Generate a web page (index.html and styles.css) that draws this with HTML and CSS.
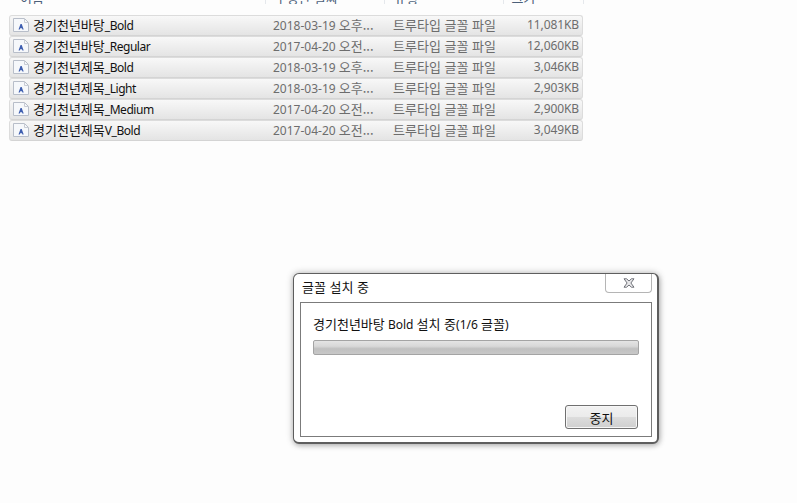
FILE: index.html
```html
<!DOCTYPE html>
<html lang="ko">
<head>
<meta charset="utf-8">
<title>글꼴 설치 중</title>
<link rel="stylesheet" href="styles.css">
</head>
<body>
<div class="explorer">
  <div class="head">
    <div class="hc c-name"><span class="ko">이름</span></div>
    <div class="hc c-date"><span class="ko">수정한 날짜</span></div>
    <div class="hc c-type"><span class="ko">유형</span></div>
    <div class="hc c-size"><span class="ko">크기</span></div>
  </div>
  <div class="list">
    <div class="row"><svg class="ficon" viewBox="0 0 16 14"><path class="page" d="M.5.5h11l4 4v9H.5z"/><path class="fold" d="M11.5.5v4h4"/><path class="a" d="M5.5 11.5l2-5.5h1.2l2 5.5H9.4L9 10.2H7.2l-.4 1.3z"/></svg><span class="n"><span class="ko">경기천년바탕</span>_Bold</span><span class="d">2018-03-19 <span class="ko">오후...</span></span><span class="t ko">트루타입 글꼴 파일</span><span class="s">11,081KB</span></div>
    <div class="row"><svg class="ficon" viewBox="0 0 16 14"><path class="page" d="M.5.5h11l4 4v9H.5z"/><path class="fold" d="M11.5.5v4h4"/><path class="a" d="M5.5 11.5l2-5.5h1.2l2 5.5H9.4L9 10.2H7.2l-.4 1.3z"/></svg><span class="n"><span class="ko">경기천년바탕</span>_Regular</span><span class="d">2017-04-20 <span class="ko">오전...</span></span><span class="t ko">트루타입 글꼴 파일</span><span class="s">12,060KB</span></div>
    <div class="row"><svg class="ficon" viewBox="0 0 16 14"><path class="page" d="M.5.5h11l4 4v9H.5z"/><path class="fold" d="M11.5.5v4h4"/><path class="a" d="M5.5 11.5l2-5.5h1.2l2 5.5H9.4L9 10.2H7.2l-.4 1.3z"/></svg><span class="n"><span class="ko">경기천년제목</span>_Bold</span><span class="d">2018-03-19 <span class="ko">오후...</span></span><span class="t ko">트루타입 글꼴 파일</span><span class="s">3,046KB</span></div>
    <div class="row"><svg class="ficon" viewBox="0 0 16 14"><path class="page" d="M.5.5h11l4 4v9H.5z"/><path class="fold" d="M11.5.5v4h4"/><path class="a" d="M5.5 11.5l2-5.5h1.2l2 5.5H9.4L9 10.2H7.2l-.4 1.3z"/></svg><span class="n"><span class="ko">경기천년제목</span>_Light</span><span class="d">2018-03-19 <span class="ko">오후...</span></span><span class="t ko">트루타입 글꼴 파일</span><span class="s">2,903KB</span></div>
    <div class="row"><svg class="ficon" viewBox="0 0 16 14"><path class="page" d="M.5.5h11l4 4v9H.5z"/><path class="fold" d="M11.5.5v4h4"/><path class="a" d="M5.5 11.5l2-5.5h1.2l2 5.5H9.4L9 10.2H7.2l-.4 1.3z"/></svg><span class="n"><span class="ko">경기천년제목</span>_Medium</span><span class="d">2017-04-20 <span class="ko">오전...</span></span><span class="t ko">트루타입 글꼴 파일</span><span class="s">2,900KB</span></div>
    <div class="row"><svg class="ficon" viewBox="0 0 16 14"><path class="page" d="M.5.5h11l4 4v9H.5z"/><path class="fold" d="M11.5.5v4h4"/><path class="a" d="M5.5 11.5l2-5.5h1.2l2 5.5H9.4L9 10.2H7.2l-.4 1.3z"/></svg><span class="n"><span class="ko">경기천년제목</span>V_Bold</span><span class="d">2017-04-20 <span class="ko">오전...</span></span><span class="t ko">트루타입 글꼴 파일</span><span class="s">3,049KB</span></div>
  </div>
</div>

<div class="dialog">
  <div class="titlebar">
    <span class="title ko">글꼴 설치 중</span>
    <button class="close" aria-label="닫기"><svg viewBox="0 0 12 10" class="x"><path d="M1 .8h2.6L6 3l2.4-2.2H11L7.9 5 11 9.2H8.4L6 7 3.6 9.2H1L4.1 5z"/></svg></button>
  </div>
  <div class="panel">
    <div class="msg"><span class="ko">경기천년바탕</span> Bold <span class="ko">설치 중</span>(1/6 <span class="ko">글꼴</span>)</div>
    <div class="progress"></div>
    <div class="actions"><button class="stop"><span class="ko">중지</span></button></div>
  </div>
</div>
</body>
</html>
```

FILE: styles.css
```css
* { box-sizing: border-box; }
html, body { margin: 0; height: 100%; }
body {
  width: 797px;
  height: 503px;
  overflow: hidden;
  position: relative;
  background: #fdfdfd;
  font-family: "Noto Sans", "Noto Sans CJK KR", sans-serif;
  font-size: 12px;
  color: #000;
}
.ko {
  font-family: "Noto Sans CJK KR", sans-serif;
  font-size: 13px;
  letter-spacing: 0;
}
.explorer { padding-left: 9px; width: 584px; }
.head {
  height: 4px;
  margin-bottom: 11px;
  display: flex;
  overflow: hidden;
  color: #4c607a;
  line-height: 12px;
}
.hc {
  height: 4px;
  display: flex;
  align-items: flex-end;
  border-right: 1px solid #e5e8ec;
  white-space: nowrap;
}
.c-name { width: 258px; padding-left: 11px; }
.c-date { width: 120px; padding-left: 9px; }
.c-type { width: 120px; padding-left: 9px; }
.c-size { width: 80px; padding-left: 7px; }
.list { width: 574px; }
.row {
  height: 21px;
  display: flex;
  align-items: center;
  border: 1px solid #dcdcdc;
  border-bottom-color: #d4d4d4;
  border-radius: 3px;
  background: linear-gradient(#f8f8f8, #f2f2f2 30%, #e4e4e4);
  white-space: nowrap;
  color: #6d6d6d;
  line-height: 18px;
  padding-bottom: 1px;
}
.ficon { width: 16px; height: 14px; margin-left: 3px; flex: none; }
.page { fill: #f6f8fb; stroke: #b8bec9; }
.fold { fill: none; stroke: #c8ccd4; }
.a { fill: #3f5fb0; }
.n { width: 240px; margin-left: 4px; color: #111; flex: none; letter-spacing: -.45px; }
.d { width: 120px; flex: none; }
.t { width: 100px; flex: none; }
.s { width: 86px; text-align: right; flex: none; letter-spacing: -.1px; }

.dialog {
  position: absolute;
  left: 293px;
  top: 273px;
  width: 366px;
  height: 171px;
  background: #fff;
  border: 2px solid #5e5e5e;
  border-top-width: 1px;
  border-left-width: 1px;
  border-radius: 6px;
  box-shadow: 0 0 7px rgba(0, 0, 0, .28), 1px 2px 5px rgba(0, 0, 0, .15);
  padding: 0 5px 5px 6px;
  display: flex;
  flex-direction: column;
}
.titlebar {
  height: 28px;
  display: flex;
  justify-content: space-between;
  align-items: flex-start;
}
.title { margin: 5px 0 0 2px; line-height: 16px; color: #111; }
.close {
  width: 47px;
  height: 19px;
  margin-right: 0;
  padding: 0;
  background: #fff;
  border: 1px solid #b5b5b5;
  border-top: 0;
  border-radius: 0 0 4px 4px;
  display: flex;
  align-items: center;
  justify-content: center;
}
.x { width: 12px; height: 10px; }
.x path { fill: #e8e8ea; stroke: #6f7178; stroke-width: 1; }
.panel {
  flex: 1;
  border: 1px solid #7b7b7b;
  background: #fff;
  padding: 12px 12px 7px;
  display: flex;
  flex-direction: column;
}
.msg { line-height: 18px; color: #111; }
.progress {
  height: 15px;
  margin-top: 6px;
  border: 1px solid #a4a4a4;
  border-radius: 2px;
  background: linear-gradient(#e4e4e4, #d8d8d8 40%, #c0c0c0 60%, #c8c8c8);
}
.actions { margin-top: auto; display: flex; justify-content: flex-end; }
.stop {
  width: 73px;
  height: 24px;
  margin-right: 1px;
  padding: 0;
  font: inherit;
  color: #111;
  border: 1px solid #707070;
  border-radius: 3px;
  background: linear-gradient(#f2f2f2, #ebebeb 48%, #dcdcdc 52%, #cfcfcf);
  box-shadow: inset 0 0 0 1px #f7f7f7;
}
```
